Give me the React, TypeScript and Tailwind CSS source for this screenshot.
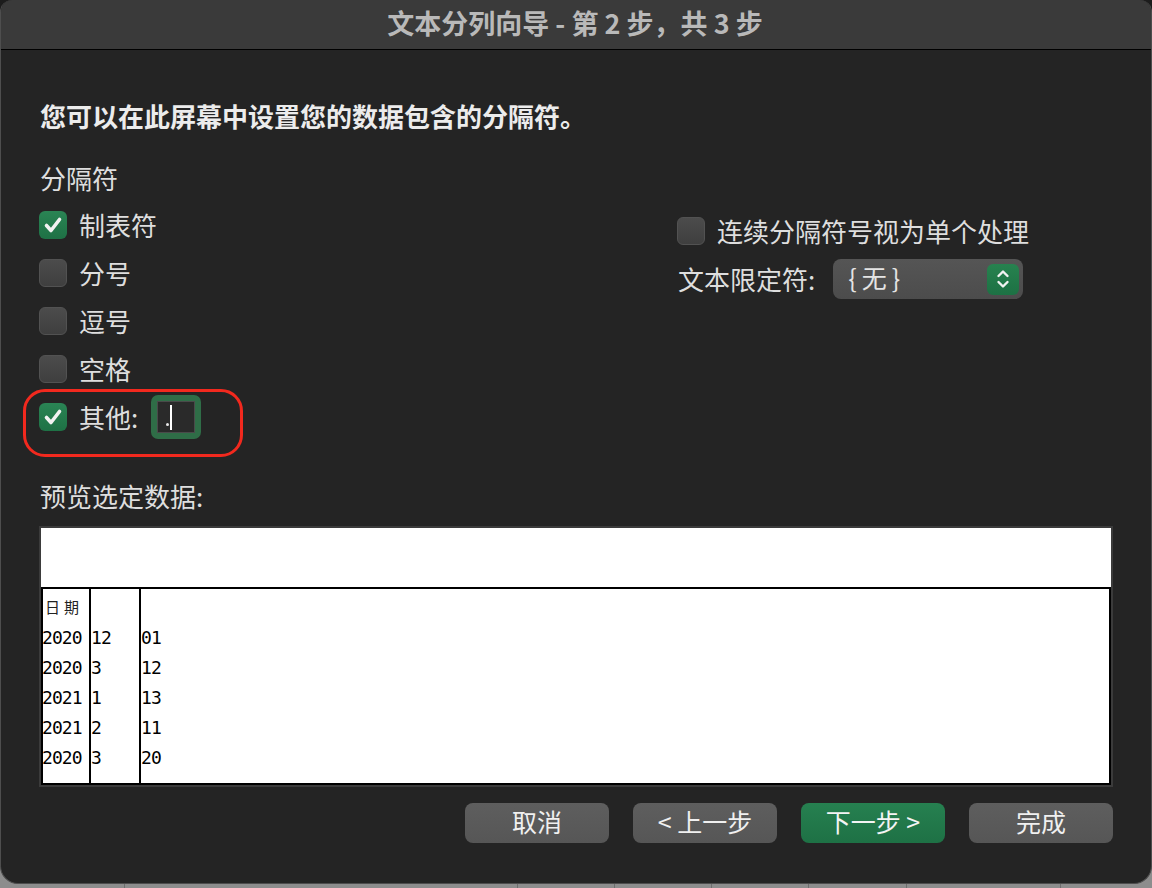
import React from "react";

const Check = () => (
  <svg width="28" height="28" viewBox="0 0 28 28" fill="none">
    <path d="M7.5 14.5 L12 19.5 L20.5 8.5" stroke="#f2f2f2" strokeWidth="3.6" strokeLinecap="round" strokeLinejoin="round" />
  </svg>
);

function Box({ checked }: { checked: boolean }) {
  return checked ? (
    <div className="w-[28px] h-[28px] rounded-[6px] bg-[linear-gradient(#2a8454,#1e7145)] shrink-0 flex items-center justify-center">
      <Check />
    </div>
  ) : (
    <div className="w-[28px] h-[28px] rounded-[6px] bg-[linear-gradient(#4c4c4c,#3f3f3f)] shrink-0 border border-[#525252]" />
  );
}

function Row({ checked, label, children }: { checked: boolean; label: string; children?: React.ReactNode }) {
  return (
    <div className="h-[48px] flex items-center relative">
      <Box checked={checked} />
      <span className="ml-[12px] text-[26px] leading-[36px] text-[#dedede]">{label}</span>
      {children}
    </div>
  );
}

const data = [
  ["2020", "12", "01"],
  ["2020", "3", "12"],
  ["2021", "1", "13"],
  ["2021", "2", "11"],
  ["2020", "3", "20"],
];

export default function App() {
  return (
    <div className="w-[1152px] h-[888px] overflow-hidden flex flex-col bg-[linear-gradient(to_bottom,#1c1c1c_50%,#8d8d8d_50%)] font-['Noto_Sans_CJK_SC','Noto_Sans',sans-serif]">
      <div className="h-[884px] shrink-0 rounded-t-[12px] rounded-b-[18px] bg-[#242424] border-b border-x border-[#4e4e4e] flex flex-col overflow-hidden">
        {/* title bar */}
        <div className="h-[50px] shrink-0 bg-[#3a3a3a] border-b-[1.5px] border-black flex items-center justify-center">
          <span className="text-[27px] font-bold text-[#b9b9b9] leading-none -mt-[5px] -ml-[2px]">文本分列向导 - 第 2 步，共 3 步</span>
        </div>

        <div className="pl-[38px] pr-[38px] flex flex-col">
          <p className="mt-[48px] h-[36px] leading-[36px] text-[26px] font-bold text-[#ececec] pl-[1px]">
            您可以在此屏幕中设置您的数据包含的分隔符。
          </p>

          <div className="mt-[26px] flex">
            <div className="w-[638px] flex flex-col">
              <p className="h-[36px] leading-[36px] text-[26px] text-[#dedede] pl-[1px]">分隔符</p>
              <div className="mt-[5px] flex flex-col">
                <Row checked label="制表符" />
                <Row checked={false} label="分号" />
                <Row checked={false} label="逗号" />
                <Row checked={false} label="空格" />
                <Row checked label="其他:">
                  <div className="ml-[13px] w-[50px] h-[44px] rounded-[7px] bg-[#2f6d47] p-[6px]">
                    <div className="w-full h-full bg-[#2a2a2a] border border-[#4a4a4a] relative">
                      <div className="absolute left-[8px] bottom-[6px] w-[3px] h-[3px] rounded-full bg-[#e6e6e6]" />
                      <div className="absolute left-[12px] top-[3px] w-[2px] h-[25px] bg-white" />
                    </div>
                  </div>
                  <div className="absolute -left-[16px] -top-[4px] w-[220px] h-[68px] border-[3px] border-[#f2291e] rounded-[22px] pointer-events-none" />
                </Row>
              </div>
            </div>

            <div className="mt-[47px] flex flex-col">
              <div className="h-[48px] flex items-center">
                <Box checked={false} />
                <span className="ml-[12px] text-[26px] leading-[36px] text-[#dedede]">连续分隔符号视为单个处理</span>
              </div>
              <div className="h-[48px] flex items-center">
                <span className="text-[26px] leading-[36px] text-[#dedede] pl-[1px]">文本限定符:</span>
                <div className="ml-[18px] w-[190px] h-[40px] rounded-[8px] bg-[linear-gradient(#555555,#4c4c4c)] flex items-center pl-[15px] pr-[4px]">
                  <span className="text-[25px] leading-none tracking-[5px] text-[#e4e4e4] flex-1 -mt-[3px]">{"{无}"}</span>
                  <div className="w-[32px] h-[31px] rounded-[6px] bg-[linear-gradient(#27824f,#1d7144)] flex items-center justify-center">
                    <svg width="16" height="22" viewBox="0 0 16 22" fill="none">
                      <path d="M3.5 8 L8 3.5 L12.5 8" stroke="#f2f2f2" strokeWidth="2.4" strokeLinecap="round" strokeLinejoin="round" />
                      <path d="M3.5 14 L8 18.5 L12.5 14" stroke="#f2f2f2" strokeWidth="2.4" strokeLinecap="round" strokeLinejoin="round" />
                    </svg>
                  </div>
                </div>
              </div>
            </div>
          </div>

          <p className="mt-[37px] h-[36px] leading-[36px] text-[26px] text-[#dedede] pl-[1px]">预览选定数据:</p>

          <div className="mt-[12px] h-[261px] border-2 border-[#3b3b3b] bg-white flex flex-col">
            <div className="h-[59px] shrink-0" />
            <div className="flex-1 border-2 border-black flex text-black font-['DejaVu_Sans_Mono',monospace] text-[18px] tracking-[-0.9px]">
              <div className="w-[48px] border-r-2 border-black pt-[3px] flex flex-col">
                <div className="h-[30px] flex items-center pl-[2px] font-['Noto_Sans_CJK_SC',sans-serif] text-[15px] tracking-[4px] text-[#222]">日期</div>
                {data.map((r, i) => (
                  <div key={i} className="h-[30px] flex items-center -ml-[1px]">{r[0]}</div>
                ))}
              </div>
              <div className="w-[50px] border-r-2 border-black pt-[3px] flex flex-col">
                <div className="h-[30px]" />
                {data.map((r, i) => (
                  <div key={i} className="h-[30px] flex items-center pl-[0px]">{r[1]}</div>
                ))}
              </div>
              <div className="flex-1 pt-[3px] flex flex-col">
                <div className="h-[30px]" />
                {data.map((r, i) => (
                  <div key={i} className="h-[30px] flex items-center pl-[0px]">{r[2]}</div>
                ))}
              </div>
            </div>
          </div>

          <div className="mt-[16px] flex justify-end gap-[24px]">
            {[
              { t: "取消", g: false },
              { t: "< 上一步", g: false },
              { t: "下一步 >", g: true },
              { t: "完成", g: false },
            ].map((b) => (
              <div
                key={b.t}
                className={
                  b.g
                    ? "w-[144px] h-[40px] rounded-[8px] bg-[linear-gradient(#268050,#1e7145)] flex items-center justify-center text-[25px] text-[#f4f4f4]"
                    : "w-[144px] h-[40px] rounded-[8px] bg-[linear-gradient(#5e5e5e,#565656)] flex items-center justify-center text-[25px] text-[#f0f0f0]"
                }
              >
                <span className="leading-none -mt-[3px]">{b.t}</span>
              </div>
            ))}
          </div>
        </div>
      </div>
      <div className="h-[4px] shrink-0 flex">
        <div className="w-[125px] border-r border-[#6e6e6e]" />
        <div className="w-[393px] border-r border-[#6e6e6e]" />
        <div className="w-[97px] border-r border-[#6e6e6e]" />
        <div className="w-[97px] border-r border-[#6e6e6e]" />
        <div className="w-[97px] border-r border-[#6e6e6e]" />
        <div className="w-[98px] border-r border-[#6e6e6e]" />
        <div className="w-[154px] border-r border-[#6e6e6e]" />
      </div>
    </div>
  );
}
